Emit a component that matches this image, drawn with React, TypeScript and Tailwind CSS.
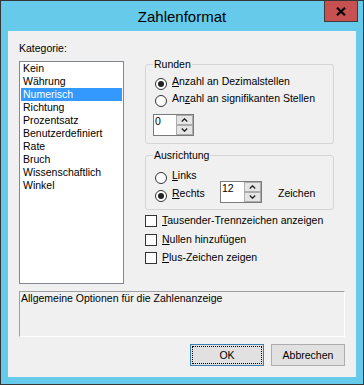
import React from "react";

function Radio({ checked, children }: { checked?: boolean; children: React.ReactNode }) {
  return (
    <div className="flex items-start">
      <span className="mt-[2.5px] w-[12px] h-[12px] rounded-full border border-[#333333] bg-white flex items-center justify-center shrink-0">
        {checked && <span className="w-[6px] h-[6px] rounded-full bg-[#222222]" />}
      </span>
      <span className="ml-[5px] leading-[13px] whitespace-nowrap">{children}</span>
    </div>
  );
}

function Check({ children }: { children: React.ReactNode }) {
  return (
    <div className="flex items-start h-[18.5px]">
      <span className="mt-[1px] w-[12px] h-[12px] border border-[#333333] bg-white shrink-0" />
      <span className="ml-[5px] leading-[13px] whitespace-nowrap">{children}</span>
    </div>
  );
}

function Chevron({ up }: { up?: boolean }) {
  return (
    <svg width="7" height="4" viewBox="0 0 7 4">
      <polyline
        points={up ? "0.8,3.5 3.5,0.8 6.2,3.5" : "0.8,0.5 3.5,3.2 6.2,0.5"}
        fill="none"
        stroke="#222"
        strokeWidth="1.3"
      />
    </svg>
  );
}

function Spinner({ value, wide }: { value: string; wide?: boolean }) {
  return (
    <div className={wide ? "flex h-[22px] w-[42px] border border-[#7a7a7a] bg-white" : "flex h-[22px] w-[41px] border border-[#7a7a7a] bg-white"}>
      <div className="flex-1 pl-[1px] leading-[13px] text-[10.5px]">{value}</div>
      <div className="w-[17px] flex flex-col">
        <div className="flex-1 bg-[#e5e5e5] border border-[#acacac] flex items-center justify-center">
          <Chevron up />
        </div>
        <div className="flex-1 bg-[#e5e5e5] border border-[#acacac] flex items-center justify-center">
          <Chevron />
        </div>
      </div>
    </div>
  );
}

function Group({ title, className, children }: { title: string; className: string; children: React.ReactNode }) {
  return (
    <div className={className}>
      <span className="absolute top-[-7px] left-[7px] bg-[#f0f0f0] px-[1px] leading-[13px]">{title}</span>
      {children}
    </div>
  );
}

export default function App() {
  const items = [
    "Kein",
    "Währung",
    "Numerisch",
    "Richtung",
    "Prozentsatz",
    "Benutzerdefiniert",
    "Rate",
    "Bruch",
    "Wissenschaftlich",
    "Winkel",
  ];
  return (
    <div className="w-[364px] h-[385px] border border-[#363636] bg-[#66cbea] flex flex-col font-['Liberation_Sans',Arial,sans-serif] text-black">
      <div className="h-[30px] grid grid-cols-[1fr_auto_1fr] items-center">
        <div />
        <div className="text-[15px] leading-[17px]">Zahlenformat</div>
        <div className="justify-self-end self-start mr-[5px] w-[34px] h-[21px] bg-[#c75050] border border-t-0 border-[#3c3c3c] flex items-center justify-center">
          <svg width="10" height="9" viewBox="0 0 10 9">
            <path d="M1 0.8 L9 8.2 M9 0.8 L1 8.2" stroke="#000" strokeWidth="2.2" />
          </svg>
        </div>
      </div>

      <div className="mx-[7px] h-[346px] bg-[#f0f0f0] px-[11px] pt-[11px] flex flex-col text-[10.5px]">
        <div className="flex">
          <div className="w-[105px] flex flex-col">
            <div className="h-[13px] leading-[13px]">Kategorie:</div>
            <div className="mt-[6px] h-[223px] border border-[#828790] bg-white px-[1px]">
              {items.map((it) => (
                <div
                  key={it}
                  className={
                    it === "Numerisch"
                      ? "h-[13px] leading-[13px] px-[2px] bg-[#3399ff] text-white"
                      : "h-[13px] leading-[13px] px-[2px]"
                  }
                >
                  {it}
                </div>
              ))}
            </div>
          </div>

          <div className="ml-[21px] w-[189px] mt-[22px] flex flex-col">
            <Group title="Runden" className="relative border border-[#d5d5d5] rounded-[3px] h-[80px] pt-[10px] pl-[7px]">
              <div className="h-[17px] pl-[2px]">
                <Radio checked>
                  <span className="underline underline-offset-1">A</span>nzahl an Dezimalstellen
                </Radio>
              </div>
              <div className="h-[17px] pl-[2px]">
                <Radio>
                  An<span className="underline underline-offset-1">z</span>ahl an signifikanten Stellen
                </Radio>
              </div>
              <div className="mt-[5px]">
                <Spinner value="0" />
              </div>
            </Group>

            <Group title="Ausrichtung" className="relative mt-[11px] border border-[#d5d5d5] rounded-[3px] h-[55px] pt-[13px] pl-[7px]">
              <div className="h-[12px] pl-[2px]">
                <Radio>
                  <span className="underline underline-offset-1">L</span>inks
                </Radio>
              </div>
              <div className="flex h-[22px]">
                <div className="w-[67px] pl-[2px] pt-[6px]">
                  <Radio checked>
                    <span className="underline underline-offset-1">R</span>echts
                  </Radio>
                </div>
                <Spinner value="12" wide />
                <div className="ml-[16px] pt-[6px] leading-[13px]">Zeichen</div>
              </div>
            </Group>

            <div className="mt-[4px] flex flex-col">
              <Check>
                <span className="underline underline-offset-1">T</span>ausender-Trennzeichen anzeigen
              </Check>
              <Check>
                <span className="underline underline-offset-1">N</span>ullen hinzufügen
              </Check>
              <Check>
                <span className="underline underline-offset-1">P</span>lus-Zeichen zeigen
              </Check>
            </div>
          </div>
        </div>

        <div className="mt-[7px] h-[46px] border border-t-[#a0a0a0] border-l-[#a0a0a0] border-b-white border-r-white pl-[1px] leading-[13px]">
          Allgemeine Optionen für die Zahlenanzeige
        </div>

        <div className="mt-[7px] flex justify-end gap-[7px]">
          <div className="w-[74px] h-[22px] border border-[#3c7fb1] bg-[#e1e1e1] p-[1px]">
            <div className="w-full h-full border border-dotted border-black flex items-center justify-center leading-[13px]">
              OK
            </div>
          </div>
          <div className="w-[74px] h-[22px] border border-[#adadad] bg-[#e1e1e1] flex items-center justify-center leading-[13px]">
            Abbrechen
          </div>
        </div>
      </div>
    </div>
  );
}
